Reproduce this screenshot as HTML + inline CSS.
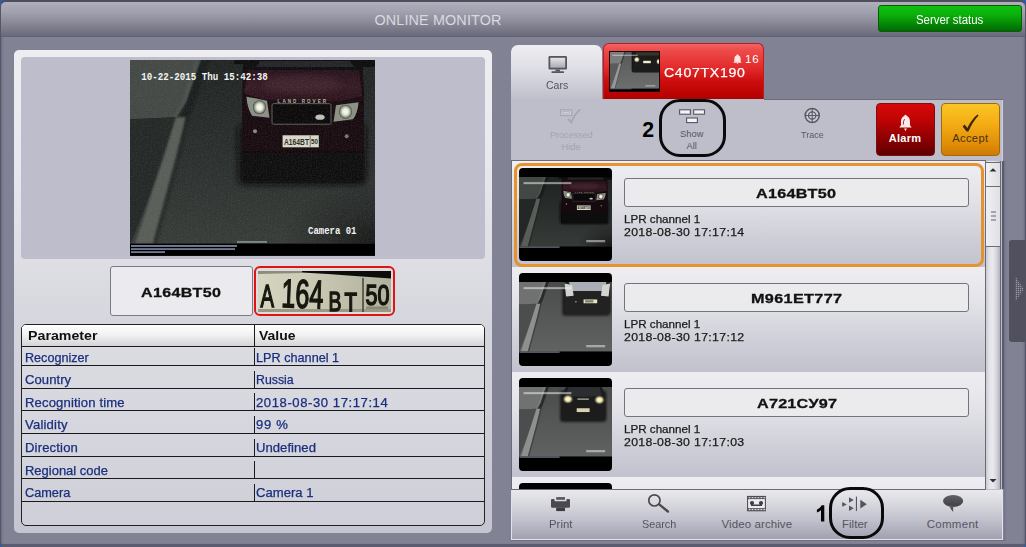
<!DOCTYPE html>
<html><head><meta charset="utf-8">
<style>
*{box-sizing:border-box;margin:0;padding:0}
html,body{width:1026px;height:547px;overflow:hidden}
body{background:#2a5db0;font-family:"Liberation Sans",sans-serif;position:relative}
.a{position:absolute}
.t{position:absolute;white-space:nowrap;line-height:1}
#win{left:0;top:0;width:1026px;height:547px;background:#828295;border:1px solid #55556a;border-top:2px solid #4e4e5c;border-bottom:3px solid #5c5c70;border-radius:6px 6px 4px 4px;box-shadow:inset 2px 0 2px -1px #6a6a7e,inset -2px 0 2px -1px #6a6a7e}
#bar{left:1px;top:2px;width:1024px;height:35px;background:linear-gradient(#b0b0bc 0%,#a0a0ae 30%,#8a8a99 60%,#737383 88%,#6a6a7a 100%);border-radius:5px 5px 0 0;border-bottom:1px solid #626270}
#srv{left:878px;top:5px;width:144px;height:27px;border-radius:3px;border:1px solid #0a5a0a;background:linear-gradient(#0ec20e 0%,#0ab00a 35%,#058405 75%,#036803 100%)}
#lp{left:14px;top:50px;width:478px;height:483px;border-radius:5px;background:linear-gradient(#ededf2 0%,#e8e8ee 22%,#dedee4 43%,#d6d6de 56%,#c5c5d2 100%)}
#imgbg{left:21px;top:57px;width:464px;height:202px;border-radius:4px;background:#bdbdcb}
.pbox{border:1px solid #7a7a85;border-radius:3px;background:#ebebef}
#tbl{left:21px;top:324px;width:464px;height:202px;border:1px solid #222;border-radius:5px;background:linear-gradient(#dcdce3 0%,#d6d6de 50%,#cfcfd9 100%);overflow:hidden}
.hl{position:absolute;left:0;width:462px;height:1px;background:#1a1a1a}
.vl{position:absolute;left:232px;width:1px;background:#1a1a1a}
.it{position:absolute;left:0;width:473px;height:105px;background:linear-gradient(#eeeef2 0%,#e2e2e8 35%,#cdcdd7 75%,#c2c2ce 100%)}
.th{position:absolute;left:7px;top:6px;width:93px;height:93px;border-radius:4px;background:#000;overflow:hidden}
.pb{position:absolute;left:112px;top:16px;width:345px;height:29px;border:1px solid #74747e;border-radius:3px;background:#ebebee}
</style></head><body>
<svg width="0" height="0" style="position:absolute">
<defs>
<linearGradient id="road" x1="0" y1="0" x2="0" y2="1"><stop offset="0" stop-color="#1f2321"/><stop offset="0.5" stop-color="#2a2e2c"/><stop offset="1" stop-color="#393d3a"/></linearGradient>
<linearGradient id="road2" x1="0" y1="0" x2="0" y2="1"><stop offset="0" stop-color="#4a4c4b"/><stop offset="0.55" stop-color="#575958"/><stop offset="1" stop-color="#626463"/></linearGradient>
<linearGradient id="hood" x1="0" y1="0" x2="0" y2="1"><stop offset="0" stop-color="#26111a"/><stop offset="0.55" stop-color="#361a24"/><stop offset="1" stop-color="#2a1119"/></linearGradient>
<radialGradient id="vg" cx="1" cy="1" r="0.75"><stop offset="0" stop-color="#000" stop-opacity="0.6"/><stop offset="0.5" stop-color="#000" stop-opacity="0.25"/><stop offset="1" stop-color="#000" stop-opacity="0"/></radialGradient>
<radialGradient id="hl"><stop offset="0" stop-color="#ffffff"/><stop offset="0.45" stop-color="#e6ecd8"/><stop offset="0.8" stop-color="#8c9484"/><stop offset="1" stop-color="#3a3a34"/></radialGradient>
<radialGradient id="hly"><stop offset="0" stop-color="#ffffee"/><stop offset="0.5" stop-color="#e8e0a8"/><stop offset="1" stop-color="#5a563c" stop-opacity="0.3"/></radialGradient>
<filter id="b1"><feGaussianBlur stdDeviation="1.2"/></filter>
<filter id="b2"><feGaussianBlur stdDeviation="3"/></filter>
<filter id="nz" x="0" y="0" width="100%" height="100%"><feTurbulence type="fractalNoise" baseFrequency="0.8" numOctaves="2" seed="3"/><feColorMatrix values="0 0 0 0 0.4  0 0 0 0 0.43  0 0 0 0 0.4  0.5 0.5 0.5 0 -0.62"/></filter>

<g id="bg1">
<rect width="245" height="195" fill="url(#road)"/>
<polygon points="0,0 71,0 56,42 46,57 0,59" fill="#434844"/>
<polygon points="65,0 71,0 56,42 46,57 43,57 52,42" fill="#4c514d" filter="url(#b1)"/>
<polygon points="0,59 46,57 34,98 10,160 0,184" fill="#232725"/>
<polygon points="71,0 79,0 62,50 54,64 48,62 57,42" fill="#191c1a" opacity="0.85" filter="url(#b1)"/>
<polygon points="46,57 56,57 46,98 23,183 5,183 33,98" fill="#585d59" filter="url(#b1)"/>
<polygon points="56,57 60,57 50,98 27,183 23,183 46,98" fill="#1b1e1c" opacity="0.5" filter="url(#b1)"/>
<rect x="120" y="100" width="125" height="83" fill="url(#vg)"/>
</g>
<g id="bg2">
<rect width="245" height="195" fill="url(#road2)"/>
<polygon points="0,0 71,0 56,42 46,57 0,59" fill="#707271"/>
<polygon points="65,0 71,0 56,42 46,57 43,57 52,42" fill="#7c7e7d" filter="url(#b1)"/>
<polygon points="0,59 46,57 34,98 10,160 0,184" fill="#4c4e4d"/>
<polygon points="71,0 79,0 62,50 54,64 48,62 57,42" fill="#232424" opacity="0.8" filter="url(#b1)"/>
<polygon points="46,57 56,57 46,98 23,183 5,183 33,98" fill="#8e908f" filter="url(#b1)"/>
<polygon points="56,57 60,57 50,98 27,183 23,183 46,98" fill="#2a2b2b" opacity="0.5" filter="url(#b1)"/>
</g>
<g id="fg">
<rect x="0" y="183" width="245" height="12" fill="#000"/>
<g fill="#b9c4ee"><rect x="1" y="184.5" width="106" height="1.6" opacity="0.75"/><rect x="1" y="187.6" width="104" height="1.6" opacity="0.7"/><rect x="1" y="190.6" width="34" height="1.6" opacity="0.7"/></g>
<rect x="107" y="180.5" width="30" height="1.6" fill="#9aa" opacity="0.8"/>
<g font-family="Liberation Mono" font-weight="bold" fill="#f2f2f2">
<text x="11.3" y="19.6" font-size="11.2" textLength="126.5" lengthAdjust="spacingAndGlyphs">10-22-2015 Thu 15:42:38</text>
<text x="178" y="173" font-size="11.6" textLength="48.5" lengthAdjust="spacingAndGlyphs">Camera 01</text>
</g>
</g>
<g id="fgs">
<rect x="0" y="183" width="245" height="12" fill="#000"/>
<rect x="1" y="183.5" width="106" height="2.5" fill="#c4ccee" opacity="0.7"/>
<rect x="12" y="13" width="126" height="6" fill="#f0f0f0" opacity="0.4"/>
<rect x="12" y="15" width="126" height="2.5" fill="#ffffff" opacity="0.35"/>
<rect x="177" y="166" width="50" height="6" fill="#f0f0f0" opacity="0.5"/>
</g>

<g id="car0">
<rect x="108" y="64" width="128" height="60" rx="6" fill="#0c0e0d" filter="url(#b2)"/>
<path d="M113,0 L232,0 L234,30 L234,112 Q234,120 225,120 L121,120 Q112,120 112,110 L112,40 Z" fill="#170a0f"/>
<rect x="104" y="0" width="20" height="4" fill="#0c0b0c"/><rect x="228" y="0" width="17" height="7" rx="2" fill="#0c0b0c"/>
<rect x="113" y="0" width="120" height="10" fill="#0d0c0e"/>
<path d="M130,1 L220,1 L224,7 L126,7 Z" fill="#242428"/>
<path d="M118,10 L229,10 L232,36 Q212,41 201,41 L141,40 Q128,39 114,33 Z" fill="url(#hood)"/>
<ellipse cx="172" cy="24" rx="40" ry="9" fill="#4a2a36" opacity="0.55" filter="url(#b2)"/>
<rect x="142" y="43.5" width="59" height="20.5" rx="1.5" fill="#0b080a" stroke="#6a6468" stroke-width="0.9"/>
<text x="147.6" y="43" font-family="Liberation Sans" font-weight="bold" font-size="4.6" fill="#b4b4a6" textLength="48.5" lengthAdjust="spacing">LAND ROVER</text>
<path d="M116.5,36.5 L137,40.5 L139.5,57.5 L122,55.5 Q117,47 116.5,36.5 Z" fill="#8a9084"/><ellipse cx="129.5" cy="47" rx="6.5" ry="7" fill="url(#hl)"/>
<path d="M228.5,42 L206,45 L203.5,61.5 L223,59 Q228,52 228.5,42 Z" fill="#8a9084"/><ellipse cx="215.5" cy="51.5" rx="6.5" ry="7" fill="url(#hl)"/>
<ellipse cx="190" cy="57" rx="4.6" ry="2.6" fill="#c0c4b8"/>
<rect x="152.6" y="75" width="36.2" height="12" fill="#dadacc"/>
<text x="154" y="85" font-family="Liberation Sans" font-weight="bold" font-size="9.5" fill="#2a2a24" textLength="25" lengthAdjust="spacingAndGlyphs">A164BT</text>
<text x="181" y="83.5" font-family="Liberation Sans" font-weight="bold" font-size="7.5" fill="#2a2a24" textLength="7" lengthAdjust="spacingAndGlyphs">50</text>
<rect x="179.8" y="75.5" width="0.7" height="11" fill="#44443c"/>
<circle cx="125" cy="71" r="2" fill="#8a8a84"/><circle cx="216.7" cy="76" r="2" fill="#77776f"/>
<rect x="112" y="92" width="122" height="30" fill="#0b090a" filter="url(#b1)"/>
</g>

<g id="car1">
<rect x="114" y="14" width="126" height="74" rx="6" fill="#1c1c1c" filter="url(#b2)"/>
<path d="M120,0 L240,0 L241,76 Q241,84 232,84 L128,84 Q119,84 119,76 Z" fill="#222"/>
<path d="M132,0 L230,0 L226,24 L136,24 Z" fill="#a9aeb4"/>
<path d="M120,4 L140,8 L144,36 L124,38 Z" fill="#d2d4d0"/>
<path d="M240,4 L220,8 L216,36 L236,38 Z" fill="#d2d4d0"/>
<rect x="170" y="46" width="36" height="10" fill="#e8e4bc"/>
<rect x="174" y="48" width="22" height="6" fill="#55554c" opacity="0.7"/>
<circle cx="150" cy="52" r="2" fill="#bbb"/>
</g>

<g id="car2">
<rect x="108" y="10" width="122" height="82" rx="8" fill="#1c1c1c" filter="url(#b2)"/>
<path d="M124,0 L218,0 Q230,20 228,80 Q228,88 218,88 L122,88 Q112,88 112,80 Q110,20 124,0 Z" fill="#1c1c1d"/>
<path d="M130,0 L212,0 L218,22 Q170,30 124,22 Z" fill="#2c2d30"/>
<ellipse cx="129" cy="32" rx="14" ry="12" fill="url(#hly)"/>
<ellipse cx="212" cy="34" rx="14" ry="12" fill="url(#hly)"/>
<rect x="152" y="56" width="34" height="10" fill="#d8d4b0"/>
<rect x="154" y="30" width="30" height="4" fill="#9a9a90"/>
</g>

<g id="car3">
<rect x="108" y="-10" width="147" height="112" rx="10" fill="#1c1c1c" filter="url(#b2)"/>
<rect x="114" y="0" width="131" height="84" fill="#1a1a1a" filter="url(#b1)"/>
<rect x="130" y="2" width="115" height="16" fill="#35352a" filter="url(#b1)"/>
<ellipse cx="134" cy="38" rx="15" ry="15" fill="url(#hly)"/>
<ellipse cx="243" cy="48" rx="12" ry="15" fill="url(#hly)"/>
<rect x="166" y="44" width="38" height="12" fill="#f0ecd0" filter="url(#b1)"/>
</g>
</defs>
</svg>

<div id="win" class="a"></div>
<div id="bar" class="a"></div>
<div class="t" style="left:374.4px;top:13px;font-size:14.4px;color:#d9d9e0;letter-spacing:0.135px;">ONLINE MONITOR</div>
<div id="srv" class="a"></div>
<div class="t" style="left:916.1px;top:14px;font-size:12.3px;color:#fff;transform:scaleX(0.9288);transform-origin:0 0;">Server status</div>
<div id="lp" class="a"></div>
<div id="imgbg" class="a"></div>
<div id="mainimg" class="a" style="left:130.4px;top:60px;width:245px;height:195.7px;background:#000;overflow:hidden"><svg width="245" height="195.7" viewBox="0 0 245 195" preserveAspectRatio="none" style="position:absolute;left:0;top:0;display:block"><use href="#bg1"/><use href="#car0"/><rect width="245" height="183" filter="url(#nz)" opacity="0.3"/><use href="#fg"/></svg>
</div>
<div class="a pbox" style="left:110px;top:266px;width:143px;height:50px"></div>
<div class="t" style="left:141.2px;top:286px;font-size:13.4px;color:#111;font-weight:bold;letter-spacing:0.254px;-webkit-text-stroke:0.3px #111;transform:scaleX(1.2000);transform-origin:0 0;">A164BT50</div>
<div class="a" style="left:254px;top:266px;width:141px;height:50px;border:2px solid #e01414;border-radius:6px;background:#ddd"></div>
<div id="plateimg" class="a" style="left:258px;top:270.5px;width:133px;height:41px;background:#b9b9a6"><svg width="133" height="41" viewBox="0 0 133 41" style="position:absolute;left:0;top:0;display:block">
<defs><linearGradient id="plg" x1="0" y1="0" x2="1" y2="0"><stop offset="0" stop-color="#d6d6c0"/><stop offset="0.35" stop-color="#ccccb6"/><stop offset="0.75" stop-color="#babaa6"/><stop offset="1" stop-color="#b0b09c"/></linearGradient>
<filter id="pb"><feGaussianBlur stdDeviation="0.45"/></filter></defs>
<rect width="133" height="41" fill="url(#plg)"/>
<polygon points="44,0 133,0 133,7.5 104,5.5 70,3 44,1.5" fill="#0c0c0a"/>
<polygon points="0,0 44,0 44,2 0,3" fill="#8c8c78"/>
<rect x="0" y="38" width="133" height="3" fill="#9a9a84"/>
<rect x="104.3" y="7" width="1.4" height="34" fill="#3a3a30"/>
<g font-family="Liberation Sans" fill="#15150f" stroke="#15150f" stroke-width="1.5" filter="url(#pb)">
<text x="2.5" y="36" font-size="32" textLength="13.5" lengthAdjust="spacingAndGlyphs" transform="translate(0,0)">A</text>
<g transform="rotate(2 25 36)">
<text x="23" y="36" font-size="40" textLength="42" lengthAdjust="spacingAndGlyphs">164</text>
</g>
<text x="70.5" y="40" font-size="28" textLength="13" lengthAdjust="spacingAndGlyphs">B</text>
<text x="86.5" y="40.5" font-size="28" textLength="12.5" lengthAdjust="spacingAndGlyphs">T</text>
<text x="107.5" y="33.5" font-size="30" textLength="24" lengthAdjust="spacingAndGlyphs">50</text>
</g>
<rect x="108" y="35.5" width="22" height="2.5" fill="#77776a" opacity="0.7"/>
</svg>
</div>
<div id="tbl" class="a">
 <div class="a" style="left:0;top:0;width:462px;height:21px;background:linear-gradient(#ffffff 0%,#f0f0f0 50%,#d4d4d8 100%)"></div>
 <div class="hl" style="top:21px"></div>
 <div class="vl" style="top:0;height:21px"></div>
 <div class="hl" style="top:40px"></div>
 <div class="vl" style="top:23px;height:17px"></div>
 <div class="hl" style="top:63px"></div>
 <div class="vl" style="top:46px;height:17px"></div>
 <div class="hl" style="top:85px"></div>
 <div class="vl" style="top:68px;height:17px"></div>
 <div class="hl" style="top:108px"></div>
 <div class="vl" style="top:91px;height:17px"></div>
 <div class="hl" style="top:131px"></div>
 <div class="vl" style="top:114px;height:17px"></div>
 <div class="hl" style="top:153px"></div>
 <div class="vl" style="top:136px;height:17px"></div>
 <div class="hl" style="top:176px"></div>
 <div class="vl" style="top:159px;height:17px"></div>
</div>
<div class="t" style="left:27.7px;top:331px;font-size:11.9px;color:#111;font-weight:bold;transform:scaleX(1.1955);transform-origin:0 0;">Parameter</div>
<div class="t" style="left:258.5px;top:331px;font-size:11.9px;color:#111;font-weight:bold;transform:scaleX(1.1739);transform-origin:0 0;">Value</div>
<div class="t" style="left:25.4px;top:353px;font-size:11.9px;color:#1b2f7c;-webkit-text-stroke:0.25px #1b2f7c;transform:scaleX(1.0599);transform-origin:0 0;">Recognizer</div>
<div class="t" style="left:256.2px;top:353px;font-size:11.9px;color:#1b2f7c;-webkit-text-stroke:0.25px #1b2f7c;transform:scaleX(1.0658);transform-origin:0 0;">LPR channel 1</div>
<div class="t" style="left:25.4px;top:375px;font-size:11.9px;color:#1b2f7c;letter-spacing:0.055px;-webkit-text-stroke:0.25px #1b2f7c;transform:scaleX(1.1000);transform-origin:0 0;">Country</div>
<div class="t" style="left:256.2px;top:375px;font-size:11.9px;color:#1b2f7c;-webkit-text-stroke:0.25px #1b2f7c;transform:scaleX(1.0364);transform-origin:0 0;">Russia</div>
<div class="t" style="left:25.4px;top:398px;font-size:11.9px;color:#1b2f7c;letter-spacing:0.133px;-webkit-text-stroke:0.25px #1b2f7c;transform:scaleX(1.1000);transform-origin:0 0;">Recognition time</div>
<div class="t" style="left:256.2px;top:398px;font-size:11.9px;color:#1b2f7c;letter-spacing:0.518px;-webkit-text-stroke:0.25px #1b2f7c;transform:scaleX(1.1000);transform-origin:0 0;">2018-08-30 17:17:14</div>
<div class="t" style="left:25.4px;top:420px;font-size:11.9px;color:#1b2f7c;letter-spacing:0.178px;-webkit-text-stroke:0.25px #1b2f7c;transform:scaleX(1.1000);transform-origin:0 0;">Validity</div>
<div class="t" style="left:256.2px;top:420px;font-size:11.9px;color:#1b2f7c;letter-spacing:0.656px;-webkit-text-stroke:0.25px #1b2f7c;transform:scaleX(1.1000);transform-origin:0 0;">99 %</div>
<div class="t" style="left:25.4px;top:443px;font-size:11.9px;color:#1b2f7c;letter-spacing:0.142px;-webkit-text-stroke:0.25px #1b2f7c;transform:scaleX(1.1000);transform-origin:0 0;">Direction</div>
<div class="t" style="left:256.2px;top:443px;font-size:11.9px;color:#1b2f7c;letter-spacing:0.036px;-webkit-text-stroke:0.25px #1b2f7c;transform:scaleX(1.1000);transform-origin:0 0;">Undefined</div>
<div class="t" style="left:25.4px;top:466px;font-size:11.9px;color:#1b2f7c;-webkit-text-stroke:0.25px #1b2f7c;transform:scaleX(1.0909);transform-origin:0 0;">Regional code</div>
<div class="t" style="left:25.4px;top:488px;font-size:11.9px;color:#1b2f7c;-webkit-text-stroke:0.25px #1b2f7c;transform:scaleX(1.0703);transform-origin:0 0;">Camera</div>
<div class="t" style="left:256.2px;top:488px;font-size:11.9px;color:#1b2f7c;letter-spacing:0.003px;-webkit-text-stroke:0.25px #1b2f7c;transform:scaleX(1.1000);transform-origin:0 0;">Camera 1</div>
<div class="a" style="left:511px;top:45px;width:91px;height:56px;border-radius:7px 7px 0 0;background:linear-gradient(#eeeef2 0%,#dfdfe6 40%,#c6c6d2 85%,#bebecb 100%)"></div>
<div class="a" style="left:603px;top:43px;width:161px;height:57px;border-radius:6px 6px 0 0;border:1px solid #c01a1a;border-bottom:2px solid #9a0a0a;background:linear-gradient(#f46464 0%,#ee4a4a 12%,#e22a2a 45%,#cc0c0c 70%,#b60000 100%)"></div>
<div id="tabthumb" class="a" style="left:610px;top:52px;width:49px;height:39px;background:#000;overflow:hidden;box-shadow:0 0 0 1px #1a0808"><svg width="49" height="39" viewBox="0 0 245 195" style="position:absolute;left:0;top:0;display:block"><use href="#bg2"/><rect width="245" height="195" fill="#fff" opacity="0.08"/><use href="#car3"/><use href="#fgs"/></svg>
</div>
<div class="t" style="left:664.4px;top:67px;font-size:12.8px;color:#fff;letter-spacing:0.642px;-webkit-text-stroke:0.25px #fff;transform:scaleX(1.1000);transform-origin:0 0;">C407TX190</div>
<div class="t" style="left:745.0px;top:53px;font-size:11.6px;color:#fff;letter-spacing:0.797px;">16</div>
<div class="t" style="left:546.0px;top:79px;font-size:11.7px;color:#555560;transform:scaleX(0.9027);transform-origin:0 0;">Cars</div>
<div class="a" style="left:511px;top:99px;width:492px;height:441px;background:#bebecb"></div>
<div id="tb" class="a" style="left:511px;top:99px;width:492px;height:62px;background:#bebecb;border-right:1px solid #d0d0da"></div>
<div class="a" style="left:764px;top:99px;width:239px;height:1px;background:#6c6c7a"></div>

<div class="a" style="left:876px;top:103px;width:59px;height:53px;border-radius:4px;border:1px solid #7a1010;background:linear-gradient(#d80808 0%,#c00404 30%,#8a0000 70%,#5e0000 100%)"></div>
<div class="a" style="left:941px;top:103px;width:59px;height:53px;border-radius:4px;border:1px solid #a06a10;background:linear-gradient(#fbc522 0%,#f3ac14 40%,#e08c08 80%,#cf7a04 100%)"></div>
<div class="t" style="left:888.7px;top:133px;font-size:11px;color:#fff;font-weight:bold;letter-spacing:0.305px;">Alarm</div>
<div class="t" style="left:952.2px;top:133px;font-size:11.2px;color:#4a3208;letter-spacing:0.332px;">Accept</div>
<div class="t" style="left:549.5px;top:131px;font-size:9.3px;color:#a2a2ae;transform:scaleX(0.9763);transform-origin:0 0;">Processed</div>
<div class="t" style="left:561.4px;top:143px;font-size:9.3px;color:#a2a2ae;letter-spacing:0.058px;">Hide</div>
<div class="t" style="left:680.1px;top:130px;font-size:9.3px;color:#555560;letter-spacing:0.045px;">Show</div>
<div class="t" style="left:686.5px;top:142px;font-size:9.3px;color:#555560;">All</div>
<div class="t" style="left:801.0px;top:131px;font-size:9.3px;color:#555560;transform:scaleX(0.9689);transform-origin:0 0;">Trace</div>
<div class="t" style="left:642.3px;top:120px;font-size:21.3px;color:#000;font-weight:bold;">2</div>
<div class="a" style="left:658.6px;top:99.4px;width:67.2px;height:57.8px;border:3.2px solid #0a0a0a;border-radius:21px"></div>
<div id="list" class="a" style="left:511px;top:160px;width:475px;height:330px;background:#f0f0f3;border:1px solid #6a6a78;overflow:hidden">
 <div class="it" style="top:1px"><div class="a" style="left:2px;top:0.5px;width:470px;height:104.3px;border:3.6px solid #e6922e;border-radius:8px"></div><div class="th"><svg width="93" height="74" viewBox="0 0 245 195" style="position:absolute;left:0;top:9px;display:block"><use href="#bg1"/><use href="#car0"/><use href="#fgs"/></svg>
</div><div class="pb"></div></div>
 <div class="it" style="top:106px"><div class="th"><svg width="93" height="74" viewBox="0 0 245 195" style="position:absolute;left:0;top:9px;display:block"><use href="#bg2"/><use href="#car1"/><use href="#fgs"/></svg>
</div><div class="pb"></div></div>
 <div class="it" style="top:211px"><div class="th"><svg width="93" height="74" viewBox="0 0 245 195" style="position:absolute;left:0;top:9px;display:block"><use href="#bg2"/><use href="#car2"/><use href="#fgs"/></svg>
</div><div class="pb"></div></div>
 <div class="it" style="top:316px"><div class="th"><!--THUMB3--></div></div>
</div>
<div class="t" style="left:756.2px;top:187px;font-size:13.5px;color:#111;font-weight:bold;letter-spacing:0.197px;-webkit-text-stroke:0.3px #111;transform:scaleX(1.2000);transform-origin:0 0;">A164BT50</div>
<div class="t" style="left:624.4px;top:214px;font-size:11.2px;color:#1a1a1a;-webkit-text-stroke:0.25px #1a1a1a;transform:scaleX(1.0385);transform-origin:0 0;">LPR channel 1</div>
<div class="t" style="left:624.4px;top:227px;font-size:11.2px;color:#1a1a1a;letter-spacing:0.298px;-webkit-text-stroke:0.25px #1a1a1a;transform:scaleX(1.1000);transform-origin:0 0;">2018-08-30 17:17:14</div>
<div class="t" style="left:750.7px;top:292px;font-size:13.5px;color:#111;font-weight:bold;letter-spacing:0.286px;-webkit-text-stroke:0.3px #111;transform:scaleX(1.2000);transform-origin:0 0;">M961ET777</div>
<div class="t" style="left:624.4px;top:319px;font-size:11.2px;color:#1a1a1a;-webkit-text-stroke:0.25px #1a1a1a;transform:scaleX(1.0385);transform-origin:0 0;">LPR channel 1</div>
<div class="t" style="left:624.4px;top:332px;font-size:11.2px;color:#1a1a1a;letter-spacing:0.298px;-webkit-text-stroke:0.25px #1a1a1a;transform:scaleX(1.1000);transform-origin:0 0;">2018-08-30 17:17:12</div>
<div class="t" style="left:756.7px;top:397px;font-size:13.5px;color:#111;font-weight:bold;letter-spacing:0.175px;-webkit-text-stroke:0.3px #111;transform:scaleX(1.2000);transform-origin:0 0;">A721CУ97</div>
<div class="t" style="left:624.4px;top:424px;font-size:11.2px;color:#1a1a1a;-webkit-text-stroke:0.25px #1a1a1a;transform:scaleX(1.0385);transform-origin:0 0;">LPR channel 1</div>
<div class="t" style="left:624.4px;top:437px;font-size:11.2px;color:#1a1a1a;letter-spacing:0.298px;-webkit-text-stroke:0.25px #1a1a1a;transform:scaleX(1.1000);transform-origin:0 0;">2018-08-30 17:17:03</div>
<div id="sb" class="a" style="left:985px;top:161px;width:16px;height:328px;border-left:1px solid #6a6a76;border-right:1px solid #6a6a76;background:linear-gradient(90deg,#cacad2 0%,#e4e4ea 25%,#e8e8ee 50%,#d4d4dc 75%,#b2b2be 100%)"><div class="a" style="left:-1px;top:1px;width:16px;height:25px;border:1px solid #6c6c76;background:linear-gradient(90deg,#f2f2f4,#dedee2)"></div><div class="a" style="left:-1px;top:25px;width:16px;height:61px;border:1px solid #6c6c76;background:linear-gradient(90deg,#f0f0f3,#e0e0e5)"></div><div class="a" style="left:4.5px;top:50px;width:5px;height:2px;background:#a4a4ac"></div><div class="a" style="left:4.5px;top:54px;width:5px;height:2px;background:#a4a4ac"></div><div class="a" style="left:4.5px;top:58px;width:5px;height:2px;background:#a4a4ac"></div><svg class="a" style="left:-1px;top:0" width="16" height="328"><polygon points="4.5,10.6 11.5,10.6 8,7.2" fill="#2e2e34"/><polygon points="4.5,318 11.5,318 8,321.6" fill="#2e2e34"/></svg>
</div>
<div class="a" style="left:1002px;top:161px;width:2px;height:328px;background:#5a5a6e"></div><div class="a" style="left:1004px;top:161px;width:3px;height:380px;background:linear-gradient(90deg,#74748a,#828296)"></div>
<div id="bt" class="a" style="left:511px;top:490px;width:492px;height:50px;background:linear-gradient(#e9e9ed 0%,#dadae0 25%,#c2c2ce 60%,#a0a0b0 100%);border:1px solid #e2e2ea;border-top:none"></div><div class="a" style="left:511px;top:540px;width:493px;height:1px;background:#6e6e80"></div>
<div class="t" style="left:549.2px;top:519px;font-size:11.5px;color:#555560;transform:scaleX(0.9896);transform-origin:0 0;">Print</div>
<div class="t" style="left:641.6px;top:519px;font-size:11.5px;color:#555560;transform:scaleX(0.9413);transform-origin:0 0;">Search</div>
<div class="t" style="left:721.5px;top:519px;font-size:11.5px;color:#555560;letter-spacing:0.094px;">Video archive</div>
<div class="t" style="left:841.9px;top:519px;font-size:11.5px;color:#555560;letter-spacing:0.049px;">Filter</div>
<div class="t" style="left:926.7px;top:519px;font-size:11.5px;color:#555560;letter-spacing:0.292px;">Comment</div>
<div class="a" style="left:828.8px;top:486.8px;width:55.4px;height:52.2px;border:3.2px solid #0a0a0a;border-radius:21px"></div>
<div class="a" style="left:1009px;top:240px;width:17px;height:102px;background:#50505f;border-radius:3px 0 0 3px"></div>
<svg width="1026" height="547" viewBox="0 0 1026 547" style="position:absolute;left:0;top:0;pointer-events:none">
<defs>
<linearGradient id="scr" x1="0" y1="0" x2="0" y2="1"><stop offset="0" stop-color="#e4e6e8"/><stop offset="1" stop-color="#a9abb0"/></linearGradient>
<pattern id="dots" width="2" height="2" patternUnits="userSpaceOnUse"><rect width="1.2" height="1.2" fill="#9c9cac"/></pattern>
<linearGradient id="cmt" x1="0" y1="0" x2="0" y2="1"><stop offset="0" stop-color="#606066"/><stop offset="1" stop-color="#3e3e44"/></linearGradient>
</defs>
<!-- monitor (Cars) -->
<g>
<rect x="548.5" y="56" width="18.5" height="13.5" rx="1.2" fill="#56565f"/>
<rect x="550.3" y="57.8" width="14.9" height="9.9" fill="url(#scr)"/>
<rect x="555.5" y="69.5" width="4.5" height="2" fill="#56565f"/>
<rect x="551.5" y="71.2" width="12.5" height="1.8" rx="0.6" fill="#56565f"/>
</g>
<!-- bell in red tab -->
<path d="M737.5,54.3 q0.9,0 0.9,0.9 q2.3,0.7 2.3,3.6 l0,2.6 l0.9,1.3 l-8.2,0 l0.9,-1.3 l0,-2.6 q0,-2.9 2.3,-3.6 q0,-0.9 0.9,-0.9 z M736.6,63 l1.8,0 l-0.9,0.9 z" fill="#ffe4e4"/>
<!-- processed/hide icon -->
<g fill="none" stroke="#a7a7b3">
<rect x="560.6" y="109.9" width="11.2" height="5.6" stroke-width="1.3" fill="#d0d0da"/>
<rect x="562.8" y="111.6" width="6.8" height="2.2" stroke-width="0.6" fill="none"/>
<path d="M567.8,118.8 L571.4,122.4 Q574,115 580.2,109.4" stroke-width="1.9" stroke-linecap="butt"/>
</g>
<!-- show all icon -->
<g fill="#f4f4f6" stroke="#55555e" stroke-width="1.1">
<rect x="679.6" y="109.8" width="10.8" height="4.4"/>
<rect x="693.7" y="109.8" width="10.8" height="4.4"/>
<rect x="686.6" y="118" width="10.8" height="4.6"/>
</g>
<!-- trace icon -->
<g fill="none" stroke="#5a5a64">
<circle cx="812.2" cy="115.5" r="7" stroke-width="1.6" fill="#cbcbd6"/>
<circle cx="812.2" cy="115.5" r="3.7" stroke-width="1.3"/>
<path d="M812.2,108.5 V122.5 M805.2,115.5 H819.2" stroke-width="1.1"/>
</g>
<!-- alarm bell -->
<path d="M905.5,114.8 q1.1,0 1.2,1.2 q3.2,1.1 3.3,5.6 l0,3.6 l1.7,2.2 l-12.4,0 l1.7,-2.2 l0,-3.6 q0.1,-4.5 3.3,-5.6 q0.1,-1.2 1.2,-1.2 z M904.1,128.6 l2.8,0 l-1.4,2.6 z" fill="#ffe9e9"/>
<path d="M904.6,119.2 q-1.4,1.6 -1.3,5.4" stroke="#b01010" stroke-width="0.9" fill="none"/>
<!-- accept check -->
<path d="M962.6,126.4 L964.6,124.6 L967.4,128 Q971.5,119.5 977.4,114.6 L978.6,115.6 Q972.5,122 968.4,131.6 L966.6,131.6 Z" fill="#3a2606"/>
<!-- print -->
<g>
<rect x="556.2" y="497.1" width="8.8" height="2.7" fill="#5a5a5e"/>
<path d="M551,500.2 q0,-1.2 1.2,-1.2 h1.4 q1,0 1,1 v1.3 h11.8 v-1.3 q0,-1 1,-1 h1.4 q1.2,0 1.2,1.2 v6.4 q0,1.2 -1.2,1.2 h-16.6 q-1.2,0 -1.2,-1.2 z" fill="#4a4a4e"/>
<rect x="556.2" y="507.6" width="8.8" height="3.5" fill="#3c3c40"/>
</g>
<!-- search -->
<g fill="none" stroke="#4a4a50">
<circle cx="654.4" cy="500.4" r="5.6" stroke-width="1.7"/>
<path d="M659.2,504.4 L667.9,511.5" stroke-width="2.4" stroke-linecap="round"/>
</g>
<!-- video archive -->
<g>
<rect x="747.6" y="496.4" width="17.8" height="14.4" fill="#ececf0" stroke="#46464c" stroke-width="1"/>
<rect x="747.6" y="496.4" width="17.8" height="2.7" fill="#46464c"/>
<rect x="747.6" y="508.2" width="17.8" height="2.7" fill="#46464c"/>
<g fill="#dcdce2"><rect x="748.60" y="497.1" width="1.9" height="1.2"/><rect x="748.60" y="509" width="1.9" height="1.2"/><rect x="751.55" y="497.1" width="1.9" height="1.2"/><rect x="751.55" y="509" width="1.9" height="1.2"/><rect x="754.50" y="497.1" width="1.9" height="1.2"/><rect x="754.50" y="509" width="1.9" height="1.2"/><rect x="757.45" y="497.1" width="1.9" height="1.2"/><rect x="757.45" y="509" width="1.9" height="1.2"/><rect x="760.40" y="497.1" width="1.9" height="1.2"/><rect x="760.40" y="509" width="1.9" height="1.2"/><rect x="763.35" y="497.1" width="1.9" height="1.2"/><rect x="763.35" y="509" width="1.9" height="1.2"/></g>
<circle cx="752" cy="503.1" r="2.1" fill="#3c3c42"/><circle cx="761" cy="503.1" r="2.1" fill="#3c3c42"/><rect x="751" y="504.5" width="11" height="1.5" fill="#3c3c42"/>
</g>
<!-- filter -->
<g fill="#55555f">
<polygon points="842.2,502 846.8,504.4 842.2,506.8"/>
<polygon points="849,497.2 853.8,500 849,502.8"/>
<polygon points="849,505.4 853.8,508.2 849,511"/>
<rect x="855.9" y="496.6" width="1.1" height="14.4"/>
<polygon points="860.3,499.8 866.8,504.2 860.3,508.6"/>
</g>
<!-- comment -->
<g fill="url(#cmt)">
<ellipse cx="953.1" cy="501" rx="10.1" ry="6.1"/>
<path d="M949.4,505.6 Q950.4,509.4 953.3,511.9 Q952.7,509 953.6,506 Z"/>
</g>
<path d="M824.3,505.3 L821.7,505.3 Q820.4,508.2 816.9,509.6 L816.9,512.5 Q819.4,511.7 821,510.2 L821,521.6 L824.3,521.6 Z" fill="#050505"/>
<!-- side tab dotted triangle -->
<polygon points="1015,276 1024,289 1015,302" fill="url(#dots)"/>
</svg>

</body></html>
